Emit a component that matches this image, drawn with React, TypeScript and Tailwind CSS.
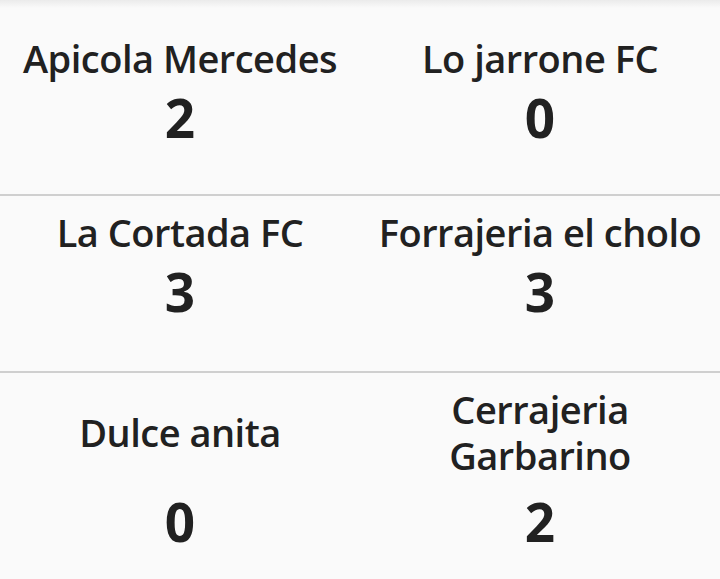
import React from "react"

// Partido: nombre de cada equipo y sus goles
type Match = {
  home: string
  homeGoals: number
  away: string
  awayGoals: number
}

const MATCHES: Match[] = [
  { home: "Apicola Mercedes", homeGoals: 2, away: "Lo jarrone FC", awayGoals: 0 },
  { home: "La Cortada FC", homeGoals: 3, away: "Forrajeria el cholo", awayGoals: 3 },
  { home: "Dulce anita", homeGoals: 0, away: "Cerrajeria Garbarino", awayGoals: 2 },
]

// spacing per row (first row sits under the toolbar shadow, last one has a taller name)
const ROW_STYLE = [
  { row: "pt-[27px] pb-[46px] border-b-2 border-[#cfcfcf]", num: "mt-[7px]" },
  { row: "pt-[13px] pb-[49px] border-b-2 border-[#cfcfcf]", num: "mt-[7px]" },
  { row: "pt-[13px] pb-[40px]", num: "mt-[14px]" },
]

function TeamCell({ name, goals, numClass }: { name: string; goals: number; numClass: string }) {
  return (
    <div className="flex flex-col items-center px-2">
      {/* name area stretches so the numbers line up across the row */}
      <div className="flex flex-1 items-center justify-center text-center text-[38px] font-semibold leading-[46px] tracking-[-0.5px]">
        {name}
      </div>
      <div className={`${numClass} text-[53px] font-bold leading-[60px]`}>{goals}</div>
    </div>
  )
}

export default function App() {
  return (
    <div className="min-h-[579px] w-[720px] overflow-hidden bg-[#fafafa] font-['Open_Sans','Lato',sans-serif] text-[#212121]">
      {/* shadow from the toolbar above */}
      <div className="h-2 bg-gradient-to-b from-[#ebebeb] to-[#fafafa]" />
      {MATCHES.map((m, i) => (
        <div key={i} className={`grid grid-cols-2 items-stretch ${ROW_STYLE[i].row}`}>
          <TeamCell name={m.home} goals={m.homeGoals} numClass={ROW_STYLE[i].num} />
          <TeamCell name={m.away} goals={m.awayGoals} numClass={ROW_STYLE[i].num} />
        </div>
      ))}
    </div>
  )
}
